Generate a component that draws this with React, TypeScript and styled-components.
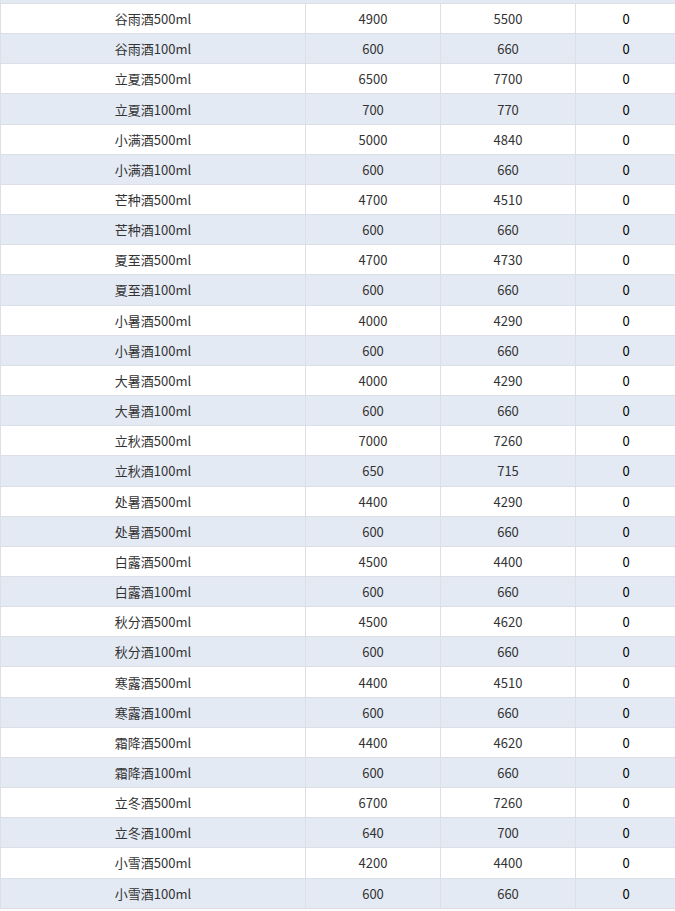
import React from 'react'
import styled, {createGlobalStyle} from 'styled-components'

const GlobalStyle = createGlobalStyle`
    html, body {
        margin: 0;
        padding: 0;
        background: #fff;
        overflow: hidden;
    }
    body {
        font-family: "Noto Sans CJK SC", "Noto Sans", sans-serif;
        font-size: 13px;
        color: #333;
    }
`

const ROW_HEIGHT = 30.17
const STRIPE = '#e4eaf4'
const LINE = '#dcdfe6'

const TableBody = styled.div`
    width: 676px;
    border-left: 1px solid ${LINE};
    box-sizing: border-box;
`

// the tail of the row above, scrolled out of view
const TopEdge = styled.div`
    height: 4px;
    box-sizing: border-box;
    background: ${STRIPE};
    border-bottom: 1px solid ${LINE};
`

const Row = styled.div<{ $striped: boolean }>`
    display: grid;
    grid-template-columns: 305px 135px 135px 1fr;
    height: ${ROW_HEIGHT}px;
    box-sizing: border-box;
    border-bottom: 1px solid ${LINE};
    background: ${p => (p.$striped ? STRIPE : '#ffffff')};
`

const Cell = styled.div<{ $strong?: boolean }>`
    display: flex;
    align-items: center;
    justify-content: center;
    border-right: 1px solid ${LINE};
    color: ${p => (p.$strong ? '#000' : '#333')};
    white-space: nowrap;
    &:last-child {
        border-right: none;
    }
`

interface IItem {
    name: string;
    cost: number;
    price: number;
    stock: number;
}

const items: IItem[] = [
    {name: '谷雨酒500ml', cost: 4900, price: 5500, stock: 0},
    {name: '谷雨酒100ml', cost: 600, price: 660, stock: 0},
    {name: '立夏酒500ml', cost: 6500, price: 7700, stock: 0},
    {name: '立夏酒100ml', cost: 700, price: 770, stock: 0},
    {name: '小满酒500ml', cost: 5000, price: 4840, stock: 0},
    {name: '小满酒100ml', cost: 600, price: 660, stock: 0},
    {name: '芒种酒500ml', cost: 4700, price: 4510, stock: 0},
    {name: '芒种酒100ml', cost: 600, price: 660, stock: 0},
    {name: '夏至酒500ml', cost: 4700, price: 4730, stock: 0},
    {name: '夏至酒100ml', cost: 600, price: 660, stock: 0},
    {name: '小暑酒500ml', cost: 4000, price: 4290, stock: 0},
    {name: '小暑酒100ml', cost: 600, price: 660, stock: 0},
    {name: '大暑酒500ml', cost: 4000, price: 4290, stock: 0},
    {name: '大暑酒100ml', cost: 600, price: 660, stock: 0},
    {name: '立秋酒500ml', cost: 7000, price: 7260, stock: 0},
    {name: '立秋酒100ml', cost: 650, price: 715, stock: 0},
    {name: '处暑酒500ml', cost: 4400, price: 4290, stock: 0},
    {name: '处暑酒500ml', cost: 600, price: 660, stock: 0},
    {name: '白露酒500ml', cost: 4500, price: 4400, stock: 0},
    {name: '白露酒100ml', cost: 600, price: 660, stock: 0},
    {name: '秋分酒500ml', cost: 4500, price: 4620, stock: 0},
    {name: '秋分酒100ml', cost: 600, price: 660, stock: 0},
    {name: '寒露酒500ml', cost: 4400, price: 4510, stock: 0},
    {name: '寒露酒100ml', cost: 600, price: 660, stock: 0},
    {name: '霜降酒500ml', cost: 4400, price: 4620, stock: 0},
    {name: '霜降酒100ml', cost: 600, price: 660, stock: 0},
    {name: '立冬酒500ml', cost: 6700, price: 7260, stock: 0},
    {name: '立冬酒100ml', cost: 640, price: 700, stock: 0},
    {name: '小雪酒500ml', cost: 4200, price: 4400, stock: 0},
    {name: '小雪酒100ml', cost: 600, price: 660, stock: 0},
]

export default function App(): React.ReactElement {
    return (
        <>
            <GlobalStyle />
            <TableBody>
                <TopEdge />
                {items.map((item, i) => (
                    <Row key={i} $striped={i % 2 === 1}>
                        <Cell>{item.name}</Cell>
                        <Cell>{item.cost}</Cell>
                        <Cell>{item.price}</Cell>
                        <Cell $strong>{item.stock}</Cell>
                    </Row>
                ))}
            </TableBody>
        </>
    )
}
